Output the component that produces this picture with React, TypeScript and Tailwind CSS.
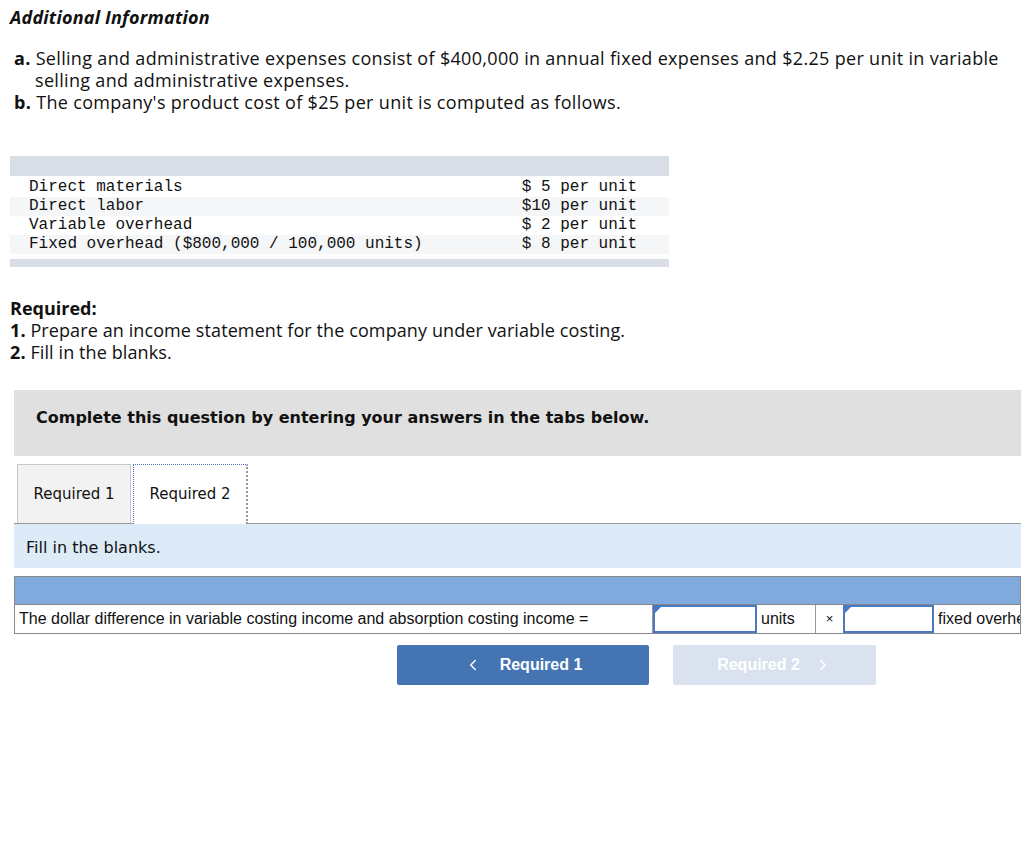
import { ChevronLeft, ChevronRight } from 'lucide-react'

const costs = [
  { label: 'Direct materials', amount: '$ 5 per unit' },
  { label: 'Direct labor', amount: '$10 per unit' },
  { label: 'Variable overhead', amount: '$ 2 per unit' },
  { label: 'Fixed overhead ($800,000 / 100,000 units)', amount: '$ 8 per unit' },
]

export default function App() {
  return (
    <div className="min-h-[849px] w-[1024px] bg-white text-[#111] overflow-hidden">
      <div className="pl-[10px] pt-[6px] font-['Open_Sans',sans-serif] tracking-[0.32px]">
        <h2 className="text-[18px] font-bold italic leading-[22px] tracking-[0.2px]">Additional Information</h2>

        <div className="mt-[19px] pl-[4px] text-[18px] leading-[22px]">
          <p className="pl-[21px] -indent-[21px]">
            <span className="font-bold">a.</span> Selling and administrative expenses consist of $400,000 in annual
            fixed expenses and $2.25 per unit in variable selling and administrative expenses.
          </p>
          <p>
            <span className="font-bold">b.</span> The company's product cost of $25 per unit is computed as follows.
          </p>
        </div>
      </div>

      <div className="mt-[43px] ml-[10px] w-[659px]">
        <div className="h-[20px] bg-[#d9dde5]" />
        <div className="pt-[2px] pb-[2px] font-['Liberation_Mono',monospace] text-[16px] leading-[19px]">
          {costs.map((c, i) => (
            <div
              key={c.label}
              className={`flex justify-between pl-[19px] pr-[32px] ${i % 2 === 0 ? 'bg-white' : 'bg-[#f5f6f8]'}`}
            >
              <span className="whitespace-pre">{c.label}</span>
              <span className="whitespace-pre">{c.amount}</span>
            </div>
          ))}
        </div>
        <div className="mt-[3px] h-[8px] bg-[#d9dde5]" />
      </div>

      <div className="mt-[30px] pl-[10px] font-['Open_Sans',sans-serif] text-[18px] leading-[22px] tracking-[0.1px]">
        <p className="font-bold tracking-[0px]">Required:</p>
        <p>
          <span className="font-bold">1.</span> Prepare an income statement for the company under variable costing.
        </p>
        <p>
          <span className="font-bold">2.</span> Fill in the blanks.
        </p>
      </div>

      <div className="ml-[14px] mr-[3px] mt-[27px]">
        <div className="h-[66px] bg-[#e0e0e0] pl-[22px] pt-[16px] font-['DejaVu_Sans',sans-serif] text-[16px] font-bold">
          Complete this question by entering your answers in the tabs below.
        </div>

        <div className="mt-[8px] flex items-end border-b border-[#999] font-['DejaVu_Sans',sans-serif] text-[15px]">
          <div className="ml-[3px] flex h-[59px] w-[114px] items-center justify-center border border-b-0 border-[#c8c8c8] bg-[#f2f2f2]">
            Required 1
          </div>
          <div className="relative -mb-px ml-[2px] flex h-[60px] w-[115px] items-center justify-center border border-dotted border-b-0 border-[#4a79c4] border-r-[#999] border-r-2 border-r-solid bg-white">
            Required 2
          </div>
        </div>

        <div className="flex h-[44px] items-center bg-[#ddeaf7] pl-[12px] pt-[3px] font-['DejaVu_Sans',sans-serif] text-[16px]">
          Fill in the blanks.
        </div>

        <div className="mt-[8px] border border-[#888] font-['Liberation_Sans',sans-serif] text-[16px]">
          <div className="h-[28px] bg-[#80aade] border-b border-[#888]" />
          <div className="flex h-[28px] items-stretch">
            <div className="flex w-[638px] items-center pl-[4px] border-r border-[#999]">
              The dollar difference in variable costing income and absorption costing income =
            </div>
            <div className="relative w-[104px] border-2 border-[#4a79c4] bg-white">
              <span className="absolute left-0 top-0 h-0 w-0 border-l-[6px] border-b-[6px] border-l-[#4a79c4] border-b-transparent" />
            </div>
            <div className="flex w-[59px] items-center pl-[4px] border-r border-[#999]">units</div>
            <div className="flex w-[27px] items-center justify-center text-[13px]">×</div>
            <div className="relative w-[91px] border-2 border-[#4a79c4] bg-white">
              <span className="absolute left-0 top-0 h-0 w-0 border-l-[6px] border-b-[6px] border-l-[#4a79c4] border-b-transparent" />
            </div>
            <div className="flex min-w-0 flex-1 items-center overflow-hidden whitespace-nowrap pl-[4px]">
              fixed overhead rate
            </div>
          </div>
        </div>
      </div>

      <div className="mt-[11px] flex gap-[24px] pl-[397px] font-['Liberation_Sans',sans-serif] text-[16px] font-bold text-white">
        <button className="flex h-[40px] w-[252px] items-center justify-center gap-[18px] rounded-[2px] bg-[#4574b3]">
          <ChevronLeft size={18} strokeWidth={2} />
          <span>Required 1</span>
        </button>
        <button className="flex h-[40px] w-[203px] items-center justify-center gap-[14px] rounded-[2px] bg-[#d9e2ee]">
          <span>Required 2</span>
          <ChevronRight size={18} strokeWidth={2} />
        </button>
      </div>
    </div>
  )
}
